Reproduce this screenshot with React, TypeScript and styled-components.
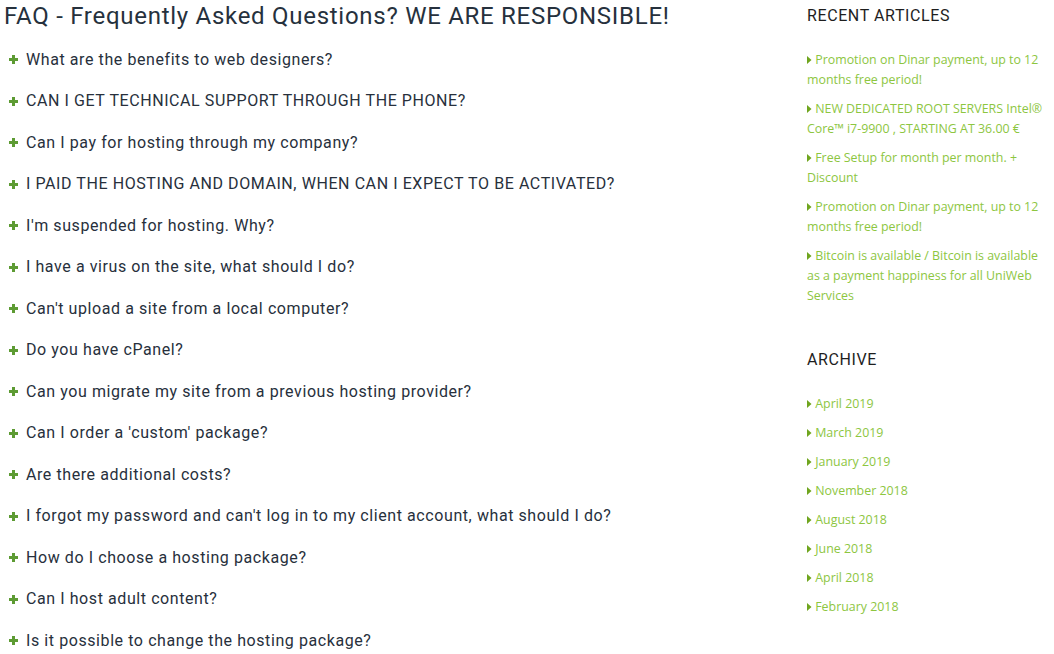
import styled, { createGlobalStyle } from "styled-components";

const questions = [
  "What are the benefits to web designers?",
  "CAN I GET TECHNICAL SUPPORT THROUGH THE PHONE?",
  "Can I pay for hosting through my company?",
  "I PAID THE HOSTING AND DOMAIN, WHEN CAN I EXPECT TO BE ACTIVATED?",
  "I'm suspended for hosting. Why?",
  "I have a virus on the site, what should I do?",
  "Can't upload a site from a local computer?",
  "Do you have cPanel?",
  "Can you migrate my site from a previous hosting provider?",
  "Can I order a 'custom' package?",
  "Are there additional costs?",
  "I forgot my password and can't log in to my client account, what should I do?",
  "How do I choose a hosting package?",
  "Can I host adult content?",
  "Is it possible to change the hosting package?",
];

const articles = [
  "Promotion on Dinar payment, up to 12 months free period!",
  "NEW DEDICATED ROOT SERVERS Intel® Core™ i7-9900 , STARTING AT 36.00 €",
  "Free Setup for month per month. + Discount",
  "Promotion on Dinar payment, up to 12 months free period!",
  "Bitcoin is available / Bitcoin is available as a payment happiness for all UniWeb Services",
];

const archive = [
  "April 2019",
  "March 2019",
  "January 2019",
  "November 2018",
  "August 2018",
  "June 2018",
  "April 2018",
  "February 2018",
];

function PlusIcon() {
  return (
    <svg width="9" height="9" viewBox="0 0 9 9">
      <path d="M3 0h3v3h3v3H6v3H3V6H0V3h3z" fill="#5d9b33" />
    </svg>
  );
}

function Caret() {
  return (
    <svg width="5" height="8" viewBox="0 0 5 8">
      <path d="M0 0l4.5 4L0 8z" fill="#6fa51e" />
    </svg>
  );
}

export default function App(): JSX.Element {
  return (
    <>
      <GlobalStyle />
      <StyledPage>
        <main>
          <StyledTitle>FAQ - Frequently Asked Questions? WE ARE RESPONSIBLE!</StyledTitle>
          <StyledQuestions>
            {questions.map((q, i) => (
              <StyledQuestion key={i}>
                <PlusIcon />
                <span>{q}</span>
              </StyledQuestion>
            ))}
          </StyledQuestions>
        </main>
        <StyledSidebar>
          <StyledWidgetTitle>Recent Articles</StyledWidgetTitle>
          <StyledLinks>
            {articles.map((a, i) => (
              <li key={i}>
                <a href="/">
                  <Caret /> {a}
                </a>
              </li>
            ))}
          </StyledLinks>
          <StyledWidgetTitle $spaced>Archive</StyledWidgetTitle>
          <StyledLinks>
            {archive.map((a, i) => (
              <li key={i}>
                <a href="/">
                  <Caret /> {a}
                </a>
              </li>
            ))}
          </StyledLinks>
        </StyledSidebar>
      </StyledPage>
    </>
  );
}

const GlobalStyle = createGlobalStyle`
  body {
    margin: 0;
    background: #fff;
    font-family: Roboto, "Liberation Sans", sans-serif;
  }
`;

const StyledPage = styled.div`
  display: grid;
  grid-template-columns: 1fr 242px;
  column-gap: 26px;
  padding: 0 5px 0 4px;
`;

const StyledTitle = styled.h1`
  margin: 1px 0 16px;
  font-family: Roboto, sans-serif;
  font-size: 24px;
  line-height: 30px;
  font-weight: 400;
  letter-spacing: 0.72px;
  color: #26313d;
  white-space: nowrap;
`;

const StyledQuestions = styled.ul`
  list-style: none;
  margin: 0;
  padding: 0 0 0 5px;
`;

const StyledQuestion = styled.li`
  display: flex;
  align-items: center;
  gap: 8px;
  height: 24px;
  margin-bottom: 17.5px;
  font-family: Roboto, sans-serif;
  font-size: 16px;
  letter-spacing: 0.58px;
  color: #27303c;

  svg {
    flex: none;
    margin-top: 1px;
  }
`;

const StyledSidebar = styled.aside`
  padding-top: 4px;
`;

const StyledWidgetTitle = styled.h3<{ $spaced?: boolean }>`
  margin: ${({ $spaced }) => ($spaced ? "42px" : "0")} 0 22px;
  font-family: Roboto, sans-serif;
  font-size: 16px;
  line-height: 24px;
  font-weight: 400;
  letter-spacing: 0.6px;
  text-transform: uppercase;
  color: #1e1e1e;
`;

const StyledLinks = styled.ul`
  list-style: none;
  margin: 0;
  padding: 0;

  li {
    margin-bottom: 9px;
    font-family: "Open Sans", sans-serif;
    font-size: 12.4px;
    line-height: 20px;
  }

  a {
    color: #8dc63f;
    text-decoration: none;
  }
`;
